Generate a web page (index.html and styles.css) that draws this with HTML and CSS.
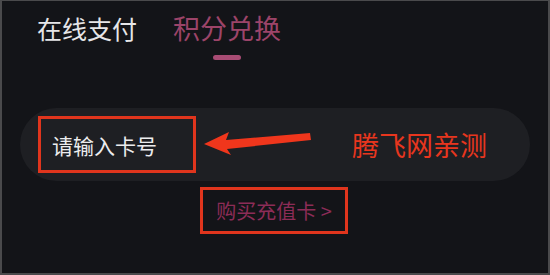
FILE: index.html
```html
<!DOCTYPE html>
<html lang="zh-CN">
<head>
    <meta charset="UTF-8">
    <meta name="viewport" content="width=device-width, initial-scale=1.0">
    <title>积分兑换</title>
    <link rel="stylesheet" href="styles.css">
</head>
<body>
    <div class="page">
        <div class="tabs">
            <div class="tab">在线支付</div>
            <div class="tab active">
                <span>积分兑换</span>
                <i class="bar"></i>
            </div>
        </div>

        <div class="card">
            <div class="input-box">请输入卡号</div>
            <svg class="arrow" width="108" height="24" viewBox="0 0 108 24">
                <polygon points="0,13 25,1 22,9 106,2 107,9 23,18 27,24" fill="#f0361c"/>
            </svg>
            <div class="note">腾飞网亲测</div>
        </div>

        <div class="buy">
            <a class="buy-link" href="#">购买充值卡 &gt;</a>
        </div>
    </div>
</body>
</html>
```

FILE: styles.css
```css
body{
    margin: 0;
    background: #131418;
    font-family: "Noto Sans CJK SC", "Noto Sans", sans-serif;
}
.page{
    width: 550px;
    height: 275px;
    box-sizing: border-box;
    border: 1px solid #4a4a4c;
    border-width: 1px 2px 2px 2px;
    background: #131418;
}
.tabs{
    display: flex;
    align-items: flex-start;
    padding: 9px 0 0 35px;
    height: 95px;
    box-sizing: border-box;
}
.tab{
    font-size: 25px;
    line-height: 36px;
    color: #e6e6e8;
}
.tab.active{
    display: flex;
    flex-direction: column;
    align-items: center;
    margin-left: 36px;
    font-size: 27px;
    color: #9c4469;
}
.bar{
    display: block;
    width: 28px;
    height: 5px;
    margin-top: 9px;
    border-radius: 3px;
    background: #a84c74;
}
.card{
    display: flex;
    align-items: center;
    margin: 12px 18px 0 18px;
    height: 73px;
    border-radius: 37px;
    background: #1e1f23;
}
.input-box{
    width: 141px;
    height: 51px;
    margin-left: 18px;
    padding-left: 11px;
    border: 3px solid #e0351d;
    display: flex;
    align-items: center;
    font-size: 21px;
    color: #ececee;
}
.arrow{
    margin-left: 8px;
    margin-top: -3px;
}
.note{
    margin-left: 40px;
    font-size: 27px;
    color: #e8361e;
}
.buy{
    display: flex;
    justify-content: center;
    margin-top: 6px;
}
.buy-link{
    width: 142px;
    height: 41px;
    border: 3px solid #e0351d;
    display: flex;
    align-items: center;
    justify-content: center;
    font-size: 20px;
    color: #8c2c57;
    text-decoration: none;
    margin-left: -2px;
}
```
